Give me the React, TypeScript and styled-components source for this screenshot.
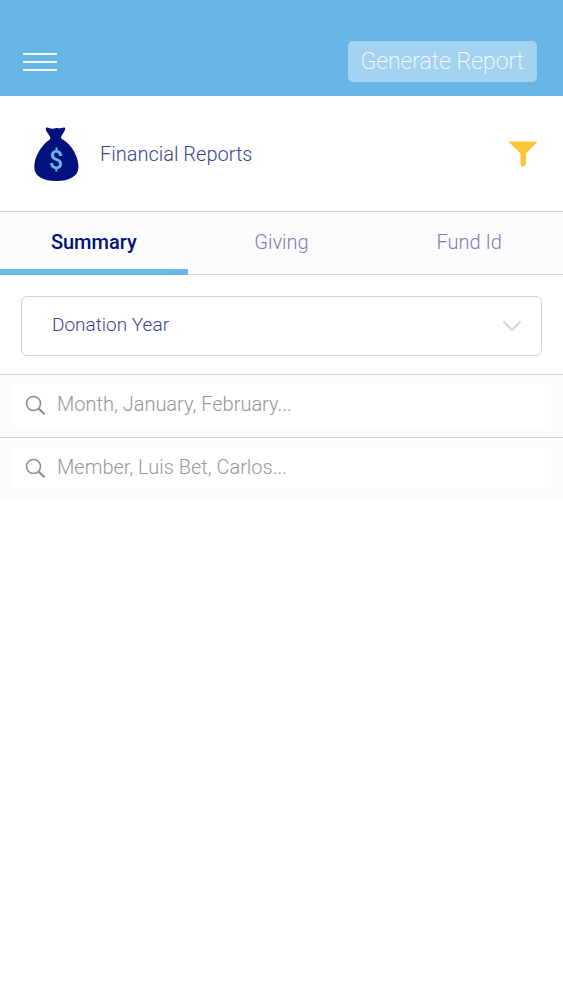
import React, { useState } from "react";
import styled, { createGlobalStyle } from "styled-components";

const colors = {
  sky: "#68b5e8",
  navy: "#00107c",
  text: "#39438f",
  line: "#d3d2d5",
  panel: "#fcfbfd",
  gray: "#97969c",
};

const GlobalStyle = createGlobalStyle`
  *, *::before, *::after { box-sizing: border-box; }
  body { margin: 0; background: #fff; }
  body, button, input, select {
    font-family: Roboto, "Liberation Sans", sans-serif;
    font-weight: 300;
  }
`;

const Header = styled.header`
  display: flex;
  align-items: flex-end;
  justify-content: space-between;
  height: 96px;
  padding: 0 26px 14px 18px;
  background: ${colors.sky};
`;

const IconButton = styled.button`
  display: flex;
  align-items: center;
  justify-content: center;
  width: 44px;
  height: 40px;
  padding: 0;
  border: 0;
  background: transparent;
  cursor: pointer;
`;

const ReportButton = styled.button`
  height: 41px;
  padding: 0 13px;
  border: 0;
  border-radius: 5px;
  background: #a4d3f1;
  color: #fff;
  font-size: 23px;
  font-weight: 200;
  line-height: 40px;
  white-space: nowrap;
  cursor: pointer;
`;

const TitleBar = styled.section`
  display: flex;
  align-items: center;
  height: 115px;
  padding: 0 18px 0 34px;
`;

const Title = styled.h1`
  flex: 1;
  margin: 0 0 0 21px;
  color: ${colors.text};
  font-size: 20px;
  font-weight: 300;
  line-height: 24px;
`;

const Tabs = styled.nav`
  display: grid;
  grid-template-columns: repeat(3, 1fr);
  height: 64px;
  border-top: 1px solid ${colors.line};
  background: ${colors.panel};
`;

const Tab = styled.button<{ $active: boolean }>`
  padding: 0 0 4px;
  border: 0;
  background: transparent;
  box-shadow: inset 0 ${(p) => (p.$active ? "-6px" : "-1px")} ${(p) => (p.$active ? colors.sky : colors.line)};
  color: ${(p) => (p.$active ? colors.navy : "#7f80ab")};
  font-size: 20px;
  font-weight: ${(p) => (p.$active ? 500 : 300)};
  line-height: 24px;
  cursor: pointer;
`;

const YearSection = styled.section`
  padding: 21px 21px 18px;
`;

const SelectBox = styled.div`
  display: grid;
  align-items: center;

  > * { grid-area: 1 / 1; }
  > svg { justify-self: end; margin-right: 20px; pointer-events: none; }
`;

const Select = styled.select`
  width: 100%;
  height: 60px;
  padding: 0 60px 3px 30px;
  border: 1px solid ${colors.line};
  border-radius: 6px;
  appearance: none;
  background: #fff;
  color: ${colors.text};
  font-size: 19px;
`;

const SearchRow = styled.div`
  padding: 9px 12px 8px;
  height: 63px;
  border-top: 1px solid ${colors.line};
  background: ${colors.panel};
`;

const SearchField = styled.label`
  display: flex;
  align-items: center;
  gap: 11px;
  height: 42px;
  padding-left: 13px;
  background: #fff;
`;

const SearchInput = styled.input`
  flex: 1;
  min-width: 0;
  height: 40px;
  padding: 0 0 2px;
  border: 0;
  outline: 0;
  background: transparent;
  color: ${colors.text};
  font-size: 20px;

  &::placeholder { color: ${colors.gray}; opacity: 1; }
`;

const MenuIcon = () => (
  <svg width="34" height="22" viewBox="0 0 34 22" stroke="#f0fbff" strokeWidth="2" aria-hidden="true">
    <path d="M0 3H34M0 11H34M0 19H34" />
  </svg>
);

const MoneyBag = () => (
  <svg width="45" height="54" viewBox="0 0 45 54" aria-hidden="true">
    <path
      fill={colors.navy}
      d="M12 0.800C14 -0.200 16 2 19 1.800C21 1.700 22 0.800 24 1.200C27 1.800 29 -0.200 31 0.800C32 2.500 29.500 5.500 27 9.800C26.800 11.300 28 12.300 30 13.300C38 18.300 44.500 30 44.500 40C44.500 49.500 35 54 22.500 54C9 54 0.300 49.500 0.300 40C0.300 30 7 18.300 15.500 12.800C16.500 12.100 16.500 11.300 16 9.800C14 5.500 11 3.500 12 0.800Z"
    />
    <text x="22" y="42" textAnchor="middle" fontFamily="Roboto, sans-serif" fontSize="25" fontWeight="500" fill={colors.sky}>
      $
    </text>
  </svg>
);

const FilterIcon = () => (
  <svg width="28" height="26" viewBox="0 0 28 26" fill="#fbc738" aria-hidden="true">
    <path d="M0.500 0.500H27.500C28 0.500 28 1.200 27.500 1.800L17 12.500V22.500C17 24 15.500 25.500 14 25.500C12.300 25.500 11.500 24.500 11.500 23V12.500L0.500 1.800C0 1.200 0 0.500 0.500 0.500Z" />
  </svg>
);

const ChevronIcon = () => (
  <svg width="20" height="12" viewBox="0 0 20 12" fill="none" stroke="#d5d5d8" strokeWidth="2" aria-hidden="true">
    <path d="M1.500 1.500L10 10L18.500 1.500" />
  </svg>
);

const SearchIcon = () => (
  <svg width="21" height="21" viewBox="0 0 21 21" fill="none" stroke="#8f8e93" aria-hidden="true">
    <circle cx="8.500" cy="8.500" r="7" strokeWidth="1.600" />
    <path d="M13.500 13.500L19.500 19.300" strokeWidth="2.200" />
  </svg>
);

const tabNames = ["Summary", "Giving", "Fund Id"];
const searches = [
  { label: "Search by month", placeholder: "Month, January, February..." },
  { label: "Search by member", placeholder: "Member, Luis Bet, Carlos..." },
];

export default function App() {
  const [active, setActive] = useState("Summary");

  return (
    <>
      <GlobalStyle />
      <Header>
        <IconButton aria-label="Menu"><MenuIcon /></IconButton>
        <ReportButton>Generate Report</ReportButton>
      </Header>
      <main>
        <TitleBar>
          <MoneyBag />
          <Title>Financial Reports</Title>
          <IconButton aria-label="Filter"><FilterIcon /></IconButton>
        </TitleBar>
        <Tabs>
          {tabNames.map((name) => (
            <Tab key={name} $active={name === active} aria-pressed={name === active} onClick={() => setActive(name)}>
              {name}
            </Tab>
          ))}
        </Tabs>
        <YearSection>
          <SelectBox>
            <Select aria-label="Donation Year" defaultValue="">
              <option value="">Donation Year</option>
            </Select>
            <ChevronIcon />
          </SelectBox>
        </YearSection>
        {searches.map((s) => (
          <SearchRow key={s.label}>
            <SearchField>
              <SearchIcon />
              <SearchInput type="text" aria-label={s.label} placeholder={s.placeholder} />
            </SearchField>
          </SearchRow>
        ))}
      </main>
    </>
  );
}
